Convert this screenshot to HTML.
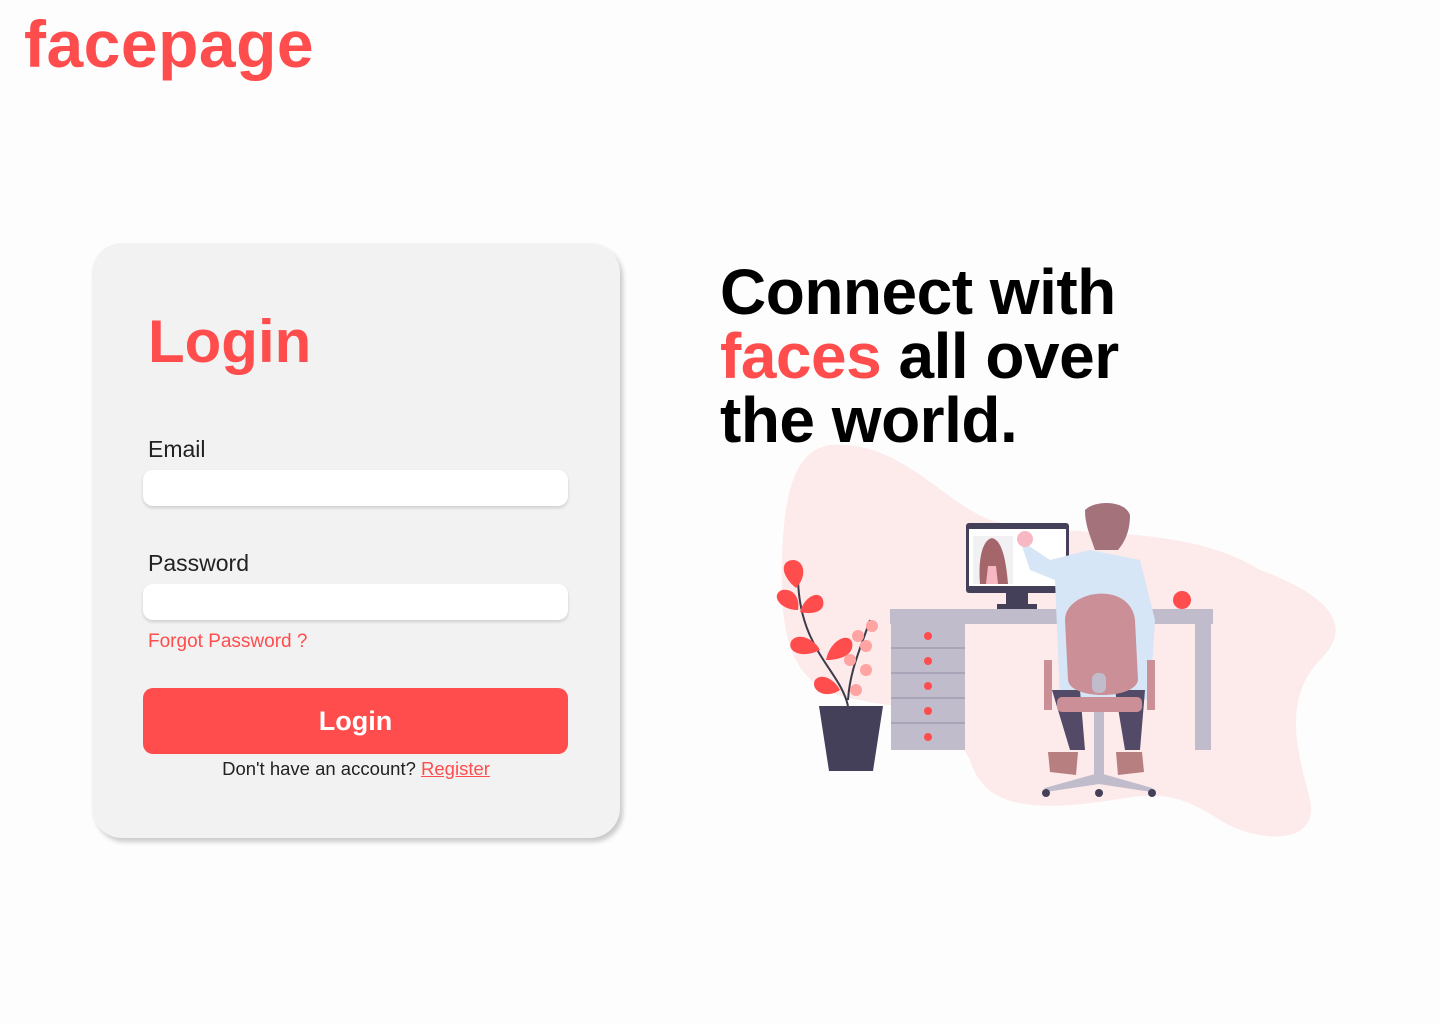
<!DOCTYPE html>
<html><head><meta charset="utf-8"><style>
*{margin:0;padding:0;box-sizing:border-box}
body{width:1440px;height:1024px;background:#fdfdfd;font-family:"Liberation Sans",sans-serif;position:relative;overflow:hidden}
.logo{position:absolute;left:24px;top:6px;font-size:66px;font-weight:bold;color:#ff4d4d;letter-spacing:0.5px}
.card{position:absolute;left:92px;top:243px;width:528px;height:595px;background:#f2f2f2;border-radius:30px;box-shadow:3px 4px 5px rgba(0,0,0,.2)}
.title{position:absolute;left:56px;top:64px;font-size:60px;font-weight:bold;color:#ff4d4d}
.lbl{position:absolute;left:56px;font-size:23px;color:#222}
.inp{position:absolute;left:51px;width:425px;height:36px;background:#fff;border-radius:10px;box-shadow:0 2px 3px rgba(0,0,0,.15)}
.forgot{position:absolute;left:56px;top:388px;font-size:19px;color:#ff4d4d}
.btn{position:absolute;left:51px;top:445px;width:425px;height:66px;background:#ff4d4d;border-radius:10px;color:#fff;font-size:27px;font-weight:bold;text-align:center;line-height:66px}
.reg{position:absolute;left:0;width:528px;top:515px;text-align:center;font-size:18.5px;color:#222}
.reg span{color:#ff4d4d;text-decoration:underline}
.head{position:absolute;left:720px;top:260px;font-size:64px;font-weight:bold;line-height:64px;color:#000;letter-spacing:-0.5px}
.head span{color:#ff4d4d}
svg{position:absolute;left:0;top:0}
</style></head><body>
<div class="logo">facepage</div>
<div class="card">
<div class="title">Login</div>
<div class="lbl" style="top:193px">Email</div>
<div class="inp" style="top:227px"></div>
<div class="lbl" style="top:307px">Password</div>
<div class="inp" style="top:341px"></div>
<div class="forgot">Forgot Password ?</div>
<div class="btn">Login</div>
<div class="reg">Don't have an account? <span>Register</span></div>
</div>
<svg width="1440" height="1024">
<path d="M830 445 C900 440 940 500 990 520 C1060 540 1180 520 1260 570 C1340 600 1350 630 1320 660 C1280 700 1300 760 1310 800 C1320 850 1250 840 1220 820 C1160 780 1140 800 1070 805 C1000 810 980 790 970 760 C940 700 900 710 860 700 C790 690 780 640 782 560 C784 480 800 450 830 445Z" fill="#fdeaea"/>
<rect x="966" y="523" width="103" height="70" rx="3" fill="#45405a"/>
<rect x="969" y="529" width="97" height="57" fill="#fff"/>
<rect x="973" y="536" width="40" height="48" fill="#f1f1f4"/>
<path d="M980 584 C978 560 982 540 992 538 C1002 540 1006 560 1008 584Z" fill="#a4666a"/>
<path d="M986 584 L988 566 L996 566 L998 584Z" fill="#f7b8c4"/>
<rect x="1006" y="593" width="22" height="14" fill="#45405a"/>
<rect x="997" y="604" width="40" height="5" fill="#45405a"/>
<rect x="890" y="609" width="323" height="15" fill="#c0bccc"/>
<rect x="891" y="624" width="74" height="126" fill="#c0bccc"/>
<g stroke="#a9a5b8" stroke-width="2"><line x1="891" y1="648" x2="965" y2="648"/><line x1="891" y1="673" x2="965" y2="673"/><line x1="891" y1="698" x2="965" y2="698"/><line x1="891" y1="723" x2="965" y2="723"/></g>
<g fill="#ff4d4d"><circle cx="928" cy="636" r="4"/><circle cx="928" cy="661" r="4"/><circle cx="928" cy="686" r="4"/><circle cx="928" cy="711" r="4"/><circle cx="928" cy="737" r="4"/></g>
<rect x="1195" y="624" width="16" height="126" fill="#c0bccc"/>
<circle cx="1182" cy="600" r="9" fill="#ff4d4d"/>
<path d="M1020 540 L1050 560 L1090 550 L1140 560 L1155 620 L1150 700 L1060 700 L1055 580 L1030 570Z" fill="#d6e6f6"/>
<circle cx="1025" cy="539" r="8" fill="#f7b8c4"/>
<path d="M1085 510 C1095 500 1125 500 1130 515 C1130 535 1122 545 1118 550 L1095 550 C1090 535 1085 525 1085 510Z" fill="#a4727a"/>
<path d="M1052 690 L1070 750 L1085 750 L1080 690Z M1115 690 L1125 750 L1140 750 L1145 690Z" fill="#524a66"/>
<path d="M1048 752 L1078 752 L1076 775 L1050 772Z M1116 752 L1142 752 L1144 772 L1118 775Z" fill="#b77f80"/>
<path d="M1065 620 C1065 590 1130 580 1135 620 L1138 680 C1135 700 1070 700 1068 680Z" fill="#cb8f97"/>
<rect x="1044" y="660" width="8" height="50" fill="#cb8f97"/><rect x="1147" y="660" width="8" height="50" fill="#cb8f97"/>
<rect x="1057" y="697" width="85" height="15" rx="5" fill="#cb8f97"/>
<rect x="1092" y="673" width="14" height="20" rx="6" fill="#c0bccc"/>
<rect x="1094" y="712" width="10" height="70" fill="#c0bccc"/>
<path d="M1045 790 L1099 775 L1152 790 L1099 782Z" fill="#c0bccc" stroke="#c0bccc" stroke-width="4"/>
<g fill="#45405a"><circle cx="1046" cy="793" r="4"/><circle cx="1099" cy="793" r="4"/><circle cx="1152" cy="793" r="4"/></g>
<path d="M819 706 L883 706 L873 771 L829 771Z" fill="#45405a"/>
<path d="M848 706 C840 670 800 650 798 580 M848 700 C850 670 860 650 870 620" stroke="#3d3a4a" stroke-width="2" fill="none"/>
<g fill="#ff4d4d"><path d="M796 588 C780 575 780 560 794 560 C806 562 806 578 796 588Z"/><path d="M798 610 C780 610 770 595 782 590 C795 588 800 600 798 610Z"/><path d="M800 612 C805 595 820 590 823 600 C826 612 812 615 800 612Z"/><path d="M820 650 C800 660 785 650 792 640 C800 632 815 640 820 650Z"/><path d="M826 660 C830 640 848 632 852 642 C855 655 840 660 826 660Z"/><path d="M840 690 C825 700 810 690 815 680 C822 672 835 680 840 690Z"/></g>
<g fill="#ffa3a3"><circle cx="872" cy="626" r="6"/><circle cx="858" cy="636" r="6"/><circle cx="866" cy="646" r="6"/><circle cx="850" cy="660" r="6"/><circle cx="866" cy="670" r="6"/><circle cx="856" cy="690" r="6"/></g>
</svg>
<div class="head">Connect with<br><span>faces</span> all over<br>the world.</div>
</body></html>
